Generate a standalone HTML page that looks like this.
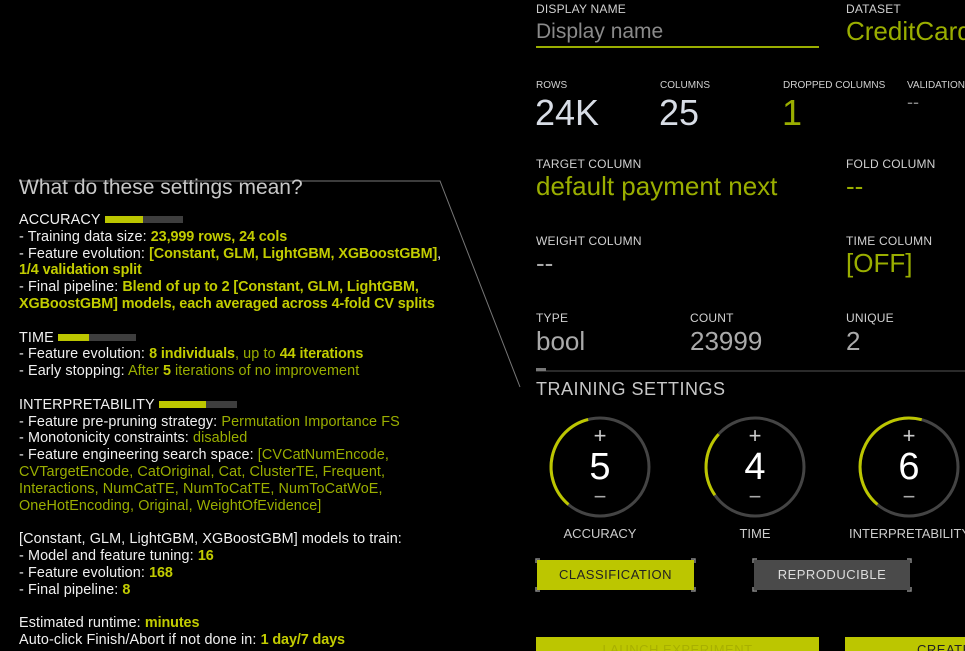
<!DOCTYPE html>
<html><head><meta charset="utf-8"><style>
*{margin:0;padding:0;box-sizing:border-box}
html,body{width:965px;height:651px}
body{background:#000;overflow:hidden;position:relative;font-family:"Liberation Sans",sans-serif;color:#e8e8e8}
.a{position:absolute;white-space:nowrap}
#help{position:absolute;left:19px;top:212px;font-size:14.4px;line-height:16.8px;letter-spacing:0.1px;color:#f0f0f0}
#help div{white-space:nowrap;height:16.8px}
.b{color:#c2cc00;font-weight:bold;letter-spacing:-0.1px}
.g{color:#9aae00}
.bar{display:inline-block;width:78px;height:7px;background:#3e3e3e;vertical-align:1px;margin-left:4px;position:relative}
.bar i{position:absolute;left:0;top:0;height:7px;background:#bcc600}
.lbl{font-size:12px;color:#d0d0d0;letter-spacing:0.2px}
.sm{font-size:10px;color:#d0d0d0}
.big{font-size:36px;color:#d8dde6;font-weight:300}
.val{font-size:26px;color:#9aae00}
.gv{font-size:26px;color:#aaa}
.btn{position:absolute;height:32px;font-size:13px;text-align:center;line-height:32px;letter-spacing:0.5px}
</style></head><body>

<svg width="965" height="651" style="position:absolute;left:0;top:0">
<polyline points="19,181 440,181 520,387" fill="none" stroke="#777" stroke-width="1"/>
<line x1="536" y1="371" x2="965" y2="371" stroke="#555" stroke-width="1"/>
<rect x="536" y="368" width="10" height="3" fill="#777"/>
<line x1="536" y1="47" x2="819" y2="47" stroke="#9aae00" stroke-width="2"/>
<g fill="none" stroke-width="3">
<circle cx="600" cy="467" r="49" stroke="#444"/>
<path d="M588.1 419.5 A49 49 0 0 0 568.5 504.5" stroke="#bcc600"/>
<circle cx="755" cy="467" r="49" stroke="#444"/>
<path d="M718.6 434.2 A49 49 0 0 0 714.9 495.1" stroke="#bcc600"/>
<circle cx="909" cy="467" r="49" stroke="#444"/>
<path d="M921.7 419.7 A49 49 0 0 0 877.5 504.5" stroke="#bcc600"/>
</g>
<g stroke="#888" stroke-width="1.5" fill="none">
<path d="M536 563v-4h4M691 559h4v4M536 587v4h4M691 591h4v-4"/>
<path d="M753 563v-4h4M907 559h4v4M753 587v4h4M907 591h4v-4"/>
</g>
</svg>

<div id="help">
<div class="a" style="left:0;top:-32px;font-size:21px;color:#c8c8c8;letter-spacing:0">What do these settings mean?</div>
<div>ACCURACY<span class="bar"><i style="width:38px"></i></span></div>
<div>- Training data size: <span class="b">23,999 rows, 24 cols</span></div>
<div>- Feature evolution: <span class="b">[Constant, GLM, LightGBM, XGBoostGBM]</span>,</div>
<div><span class="b">1/4 validation split</span></div>
<div>- Final pipeline: <span class="b">Blend of up to 2 [Constant, GLM, LightGBM,</span></div>
<div><span class="b">XGBoostGBM] models, each averaged across 4-fold CV splits</span></div>
<div></div>
<div>TIME<span class="bar"><i style="width:31px"></i></span></div>
<div>- Feature evolution: <span class="b">8 individuals</span><span class="g">, up to </span><span class="b">44 iterations</span></div>
<div>- Early stopping: <span class="g">After </span><span class="b">5</span><span class="g"> iterations of no improvement</span></div>
<div></div>
<div>INTERPRETABILITY<span class="bar"><i style="width:47px"></i></span></div>
<div>- Feature pre-pruning strategy: <span class="g">Permutation Importance FS</span></div>
<div>- Monotonicity constraints: <span class="g">disabled</span></div>
<div>- Feature engineering search space: <span class="g">[CVCatNumEncode,</span></div>
<div><span class="g">CVTargetEncode, CatOriginal, Cat, ClusterTE, Frequent,</span></div>
<div><span class="g">Interactions, NumCatTE, NumToCatTE, NumToCatWoE,</span></div>
<div><span class="g">OneHotEncoding, Original, WeightOfEvidence]</span></div>
<div></div>
<div>[Constant, GLM, LightGBM, XGBoostGBM] models to train:</div>
<div>- Model and feature tuning: <span class="b">16</span></div>
<div>- Feature evolution: <span class="b">168</span></div>
<div>- Final pipeline: <span class="b">8</span></div>
<div></div>
<div>Estimated runtime: <span class="b">minutes</span></div>
<div>Auto-click Finish/Abort if not done in: <span class="b">1 day/7 days</span></div>
</div>

<div class="a lbl" style="left:536px;top:2px">DISPLAY NAME</div>
<div class="a" style="left:536px;top:20px;font-size:21px;color:#8a8a8a">Display name</div>
<div class="a lbl" style="left:846px;top:2px">DATASET</div>
<div class="a val" style="left:846px;top:16px">CreditCard</div>

<div class="a sm" style="left:536px;top:80px">ROWS</div>
<div class="a sm" style="left:660px;top:80px">COLUMNS</div>
<div class="a sm" style="left:783px;top:80px">DROPPED COLUMNS</div>
<div class="a sm" style="left:907px;top:80px">VALIDATION DATASET</div>
<div class="a big" style="left:535px;top:92px">24K</div>
<div class="a big" style="left:659px;top:92px">25</div>
<div class="a big" style="left:782px;top:92px;color:#9aae00">1</div>
<div class="a" style="left:907px;top:92px;font-size:18px;color:#888">--</div>

<div class="a lbl" style="left:536px;top:157px">TARGET COLUMN</div>
<div class="a val" style="left:536px;top:171px">default payment next</div>
<div class="a lbl" style="left:846px;top:157px">FOLD COLUMN</div>
<div class="a gv" style="left:846px;top:171px;color:#9aae00">--</div>

<div class="a lbl" style="left:536px;top:234px">WEIGHT COLUMN</div>
<div class="a gv" style="left:536px;top:248px">--</div>
<div class="a lbl" style="left:846px;top:234px">TIME COLUMN</div>
<div class="a val" style="left:846px;top:248px">[OFF]</div>

<div class="a lbl" style="left:536px;top:311px">TYPE</div>
<div class="a gv" style="left:536px;top:326px">bool</div>
<div class="a lbl" style="left:690px;top:311px">COUNT</div>
<div class="a gv" style="left:690px;top:326px">23999</div>
<div class="a lbl" style="left:846px;top:311px">UNIQUE</div>
<div class="a gv" style="left:846px;top:326px">2</div>

<div class="a" style="left:536px;top:379px;font-size:18px;color:#c8c8c8;letter-spacing:0.5px">TRAINING SETTINGS</div>

<div class="a" style="left:590px;top:423px;font-size:22px;color:#ccc;width:20px;text-align:center">+</div>
<div class="a" style="left:575px;top:446px;font-size:38px;color:#fff;width:50px;text-align:center;font-weight:300">5</div>
<div class="a" style="left:590px;top:484px;font-size:22px;color:#aaa;width:20px;text-align:center">−</div>
<div class="a" style="left:745px;top:423px;font-size:22px;color:#ccc;width:20px;text-align:center">+</div>
<div class="a" style="left:730px;top:446px;font-size:38px;color:#fff;width:50px;text-align:center;font-weight:300">4</div>
<div class="a" style="left:745px;top:484px;font-size:22px;color:#aaa;width:20px;text-align:center">−</div>
<div class="a" style="left:899px;top:423px;font-size:22px;color:#ccc;width:20px;text-align:center">+</div>
<div class="a" style="left:884px;top:446px;font-size:38px;color:#fff;width:50px;text-align:center;font-weight:300">6</div>
<div class="a" style="left:899px;top:484px;font-size:22px;color:#aaa;width:20px;text-align:center">−</div>

<div class="a" style="left:550px;top:526px;width:100px;text-align:center;font-size:13px;color:#ccc">ACCURACY</div>
<div class="a" style="left:705px;top:526px;width:100px;text-align:center;font-size:13px;color:#ccc">TIME</div>
<div class="a" style="left:849px;top:526px;width:120px;text-align:center;font-size:13px;color:#ccc">INTERPRETABILITY</div>

<div class="btn" style="left:537px;top:560px;width:157px;background:#bcc600;color:#222;height:30px;line-height:30px">CLASSIFICATION</div>
<div class="btn" style="left:754px;top:560px;width:156px;background:#4a4a4a;color:#ddd;height:30px;line-height:30px">REPRODUCIBLE</div>

<div class="btn" style="left:536px;top:637px;width:283px;background:#bcc600;color:#a8b000;height:14px;line-height:26px;overflow:hidden">LAUNCH EXPERIMENT</div>
<div class="btn" style="left:845px;top:637px;width:120px;background:#bcc600;color:#222;height:14px;line-height:26px;text-align:left;padding-left:72px;overflow:hidden">CREATE</div>
</body></html>
